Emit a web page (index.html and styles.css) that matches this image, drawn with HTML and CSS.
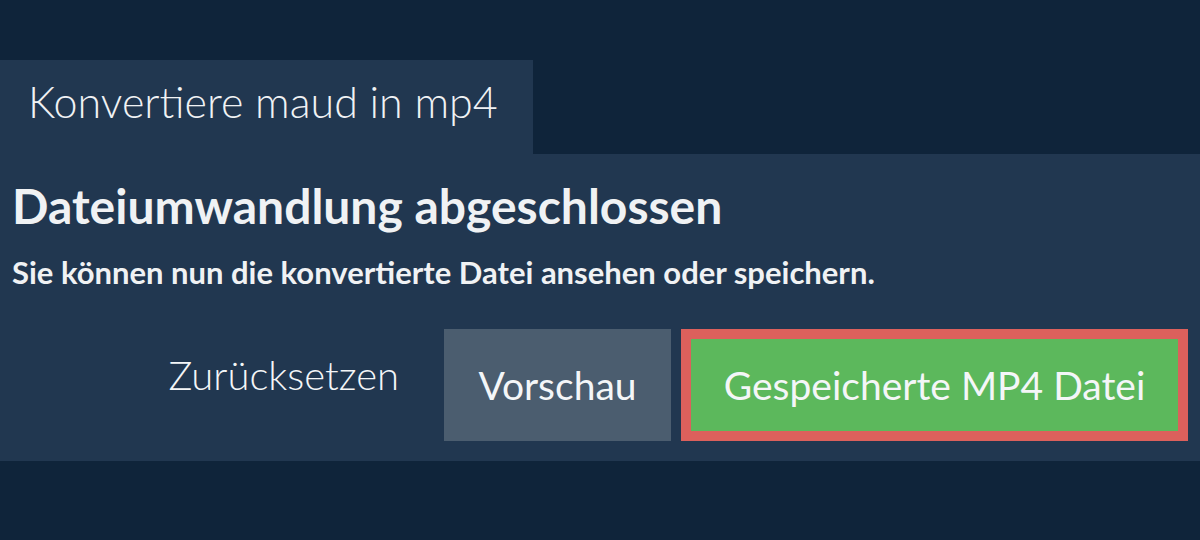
FILE: index.html
```html
<!DOCTYPE html>
<html lang="de">
<head>
<meta charset="utf-8">
<link rel="stylesheet" href="styles.css">
</head>
<body>
<div class="page">
  <div class="tab">Konvertiere maud in mp4</div>
  <div class="panel">
    <h1 class="title">Dateiumwandlung abgeschlossen</h1>
    <p class="sub">Sie können nun die konvertierte Datei ansehen oder speichern.</p>
    <div class="actions">
      <button class="btn btn-link">Zurücksetzen</button>
      <button class="btn btn-grey">Vorschau</button>
      <button class="btn btn-green">Gespeicherte MP4 Datei</button>
    </div>
  </div>
</div>
</body>
</html>
```
FILE: styles.css
```css
html, body {
  margin: 0;
  padding: 0;
  background: #0f243a;
  height: 100%;
}
body {
  font-family: Lato, "Noto Sans", sans-serif;
  color: #f0f2f4;
}
.page {
  padding-top: 60px;
}
.tab {
  display: inline-block;
  box-sizing: border-box;
  width: 533px;
  height: 94px;
  background: #213750;
  padding: 17px 0 0 28px;
  font-size: 43px;
  font-weight: 300;
  line-height: 50px;
  vertical-align: top;
}
.panel {
  display: flex;
  flex-direction: column;
  background: #213750;
  padding: 22px 12px 20px 12px;
  height: 307px;
  box-sizing: border-box;
}
.title {
  margin: 0;
  font-size: 48px;
  font-weight: 700;
  line-height: 60px;
}
.sub {
  margin: 18px 0 0 0;
  font-size: 31px;
  font-weight: 700;
  line-height: 36px;
}
.actions {
  display: flex;
  justify-content: flex-end;
  gap: 10px;
  margin-top: auto;
}
.btn {
  font-family: inherit;
  border: 0;
  background: none;
  color: #f4f6f8;
  font-size: 39px;
  font-weight: 300;
  height: 112px;
  padding: 0 30px;
  box-sizing: border-box;
}
.btn-link {
  font-size: 40px;
  padding: 0 35px 20px 30px;
}
.btn-grey {
  background: #4b5d6f;
  width: 227px;
  font-weight: 400;
}
.btn-green {
  background: #5cb85c;
  border: 10px solid #dc605c;
  width: 507px;
  font-weight: 400;
}
```
